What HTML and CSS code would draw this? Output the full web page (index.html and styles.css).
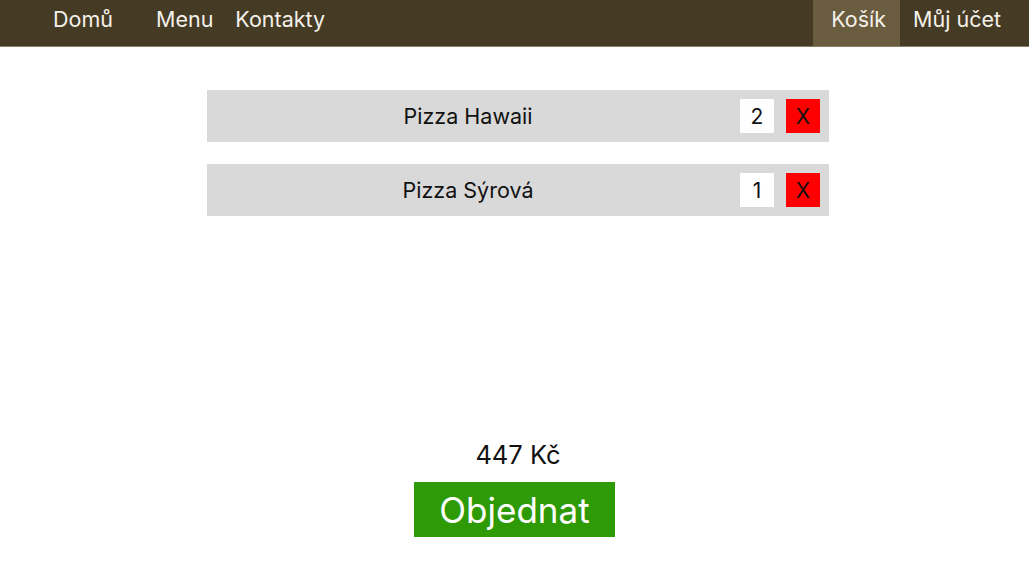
FILE: index.html
```html
<!DOCTYPE html>
<html lang="cs">
<head>
<meta charset="utf-8">
<title>Košík</title>
<link rel="stylesheet" href="styles.css">
</head>
<body>
<nav class="topbar">
  <div class="nav-left">
    <a class="nav-item nav-home">Domů</a>
    <a class="nav-item">Menu</a>
    <a class="nav-item">Kontakty</a>
  </div>
  <div class="nav-right">
    <a class="nav-item nav-active">Košík</a>
    <a class="nav-item nav-account">Můj účet</a>
  </div>
</nav>
<main class="cart">
  <div class="cart-list">
    <div class="cart-row">
      <span class="cart-name">Pizza Hawaii</span>
      <span class="cart-qty">2</span>
      <span class="cart-remove">X</span>
    </div>
    <div class="cart-row">
      <span class="cart-name">Pizza Sýrová</span>
      <span class="cart-qty">1</span>
      <span class="cart-remove">X</span>
    </div>
  </div>
  <div class="cart-total">447 Kč</div>
  <div class="order-wrap">
    <button class="order-btn">Objednat</button>
  </div>
</main>
</body>
</html>
```
FILE: styles.css
```css
html, body {
  margin: 0;
  padding: 0;
  background: #ffffff;
  font-family: Inter, "Liberation Sans", sans-serif;
  color: #111111;
}

.topbar {
  display: flex;
  justify-content: space-between;
  height: 46px;
  background: #453a24;
  border-bottom: 1px solid #8a7f66;
}

.nav-left, .nav-right {
  display: flex;
  align-items: stretch;
}

.nav-left {
  padding-left: 42px;
}

.nav-item {
  display: flex;
  align-items: flex-start;
  padding: 7px 11px 0;
  font-size: 21.5px;
  line-height: 25px;
  color: #f4f1ea;
  cursor: pointer;
}

.nav-home {
  margin-right: 21px;
}

.nav-active {
  background: #6a5c3f;
  padding: 7px 14px 0 18px;
}

.nav-account {
  padding: 7px 28px 0 13px;
}

.cart {
  display: flex;
  flex-direction: column;
}

.cart-list {
  display: flex;
  flex-direction: column;
  gap: 22px;
  width: 622px;
  margin: 43px 0 0 207px;
}

.cart-row {
  display: flex;
  align-items: center;
  height: 52px;
  background: #d9d9d9;
  padding-right: 9px;
}

.cart-name {
  flex: 1;
  text-align: center;
  font-size: 21.5px;
  line-height: 26px;
  margin-right: 11px;
}

.cart-qty, .cart-remove {
  width: 34px;
  height: 34px;
  display: flex;
  align-items: center;
  justify-content: center;
  font-size: 21px;
}

.cart-qty {
  background: #ffffff;
  margin-right: 12px;
}

.cart-remove {
  background: #ff0000;
  color: #111111;
}

.cart-total {
  width: 622px;
  margin: 224px 0 0 207px;
  text-align: center;
  font-size: 25.5px;
  line-height: 30px;
}

.order-wrap {
  display: flex;
  justify-content: center;
  margin-top: 12px;
}

.order-btn {
  width: 201px;
  height: 55px;
  border: none;
  background: #2e9a06;
  color: #ffffff;
  font-family: Inter, "Liberation Sans", sans-serif;
  font-size: 35px;
  line-height: 40px;
  padding: 0;
}
```
